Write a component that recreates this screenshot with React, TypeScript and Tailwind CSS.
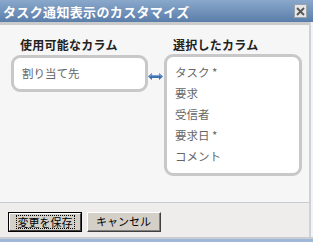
import React from 'react';

const jp = { fontFamily: '"Noto Sans CJK JP", "Noto Sans", sans-serif' };

const selected = ['タスク *', '要求', '受信者', '要求日 *', 'コメント'];

// Double-headed arrow between the two lists
const SwapArrow = () => (
    <svg width="15" height="7" viewBox="0 0 15 7" className="block">
        <path d="M0 3.5 L4 0 L4 2 L11 2 L11 0 L15 3.5 L11 7 L11 5 L4 5 L4 7 Z" fill="#3d6fb0" />
        <path d="M1.5 3.5 L4 1.3 L4 2.6 L11 2.6 L11 1.3 L13.5 3.5" fill="none" stroke="#8fb4e0" strokeWidth="0.8" />
    </svg>
);

export default function App() {
    return (
        <div className="w-[313px] h-[242px] bg-[#f4f4f4] overflow-hidden flex flex-col" style={jp}>
            {/* Title bar */}
            <div className="h-[22px] flex items-center justify-between pl-[3px] pr-[6px] bg-gradient-to-b from-[#8aa8cb] to-[#5a7eaa]">
                <span className="text-[13px] font-bold text-white tracking-[0.35px] leading-none">タスク通知表示のカスタマイズ</span>
                <button className="w-[13px] h-[14px] flex items-center justify-center bg-[#e6e6e6] border border-[#9aa4b0]">
                    <svg width="9" height="9" viewBox="0 0 9 9">
                        <path d="M1 1 L8 8 M8 1 L1 8" stroke="#555" strokeWidth="1.8" />
                    </svg>
                </button>
            </div>

            <div className="flex flex-col w-[311px] border-r-2 border-[#cdd2d8] flex-1">
                {/* Body */}
                <div className="h-[180px] border-t-[3px] border-[#cbcbcb] bg-[#f6f6f6] flex pl-[11px] pt-[13px]">
                    <div className="flex flex-col">
                        <h3 className="text-[12px] font-bold text-[#222] leading-[14px] pl-[9px] tracking-[0.25px]">使用可能なカラム</h3>
                        <div className="mt-[3px] w-[137px] h-[37px] bg-white border-[3px] border-[#c8c8c8] rounded-[9px] flex items-center pl-[8px]">
                            <span className="text-[11.5px] text-[#666]">割り当て先</span>
                        </div>
                    </div>
                    <div className="pt-[35px]">
                        <SwapArrow />
                    </div>
                    <div className="flex flex-col ml-[1px]">
                        <h3 className="text-[12px] font-bold text-[#222] leading-[14px] pl-[9px] tracking-[0.25px]">選択したカラム</h3>
                        <div className="mt-[2px] w-[138px] h-[122px] bg-white border-[3px] border-[#c8c8c8] rounded-[9px] pl-[8px] pt-[5px]">
                            {selected.map((c) => (
                                <div key={c} className="text-[11.5px] text-[#666] leading-[21px]">{c}</div>
                            ))}
                        </div>
                    </div>
                </div>

                {/* Footer */}
                <div className="flex-1 border-t border-[#c7ccd3] bg-[#eeedeb] flex items-start gap-[5px] pl-[8px] pt-[9px]">
                    <button className="w-[74px] h-[20px] border border-black bg-[#d4d0c8] p-0">
                        <div className="h-full border-t border-l border-t-white border-l-white border-b border-r border-b-[#404040] border-r-[#404040] flex items-center justify-center">
                            <div className="border border-dotted border-black px-[1px] leading-[12px] text-[11px] text-black">変更を保存</div>
                        </div>
                    </button>
                    <button className="w-[74px] h-[20px] bg-[#d4d0c8] border-t border-l border-t-white border-l-white border-b border-r border-b-[#404040] border-r-[#404040] p-0">
                        <div className="h-full border-b border-r border-b-[#808080] border-r-[#808080] flex items-center justify-center text-[11px] text-black leading-none">キャンセル</div>
                    </button>
                </div>
            </div>
            <div className="h-[2px] bg-[#c9ccd0]" />
            <div className="h-[3px] bg-[#9fb8d8]" />
        </div>
    );
}
